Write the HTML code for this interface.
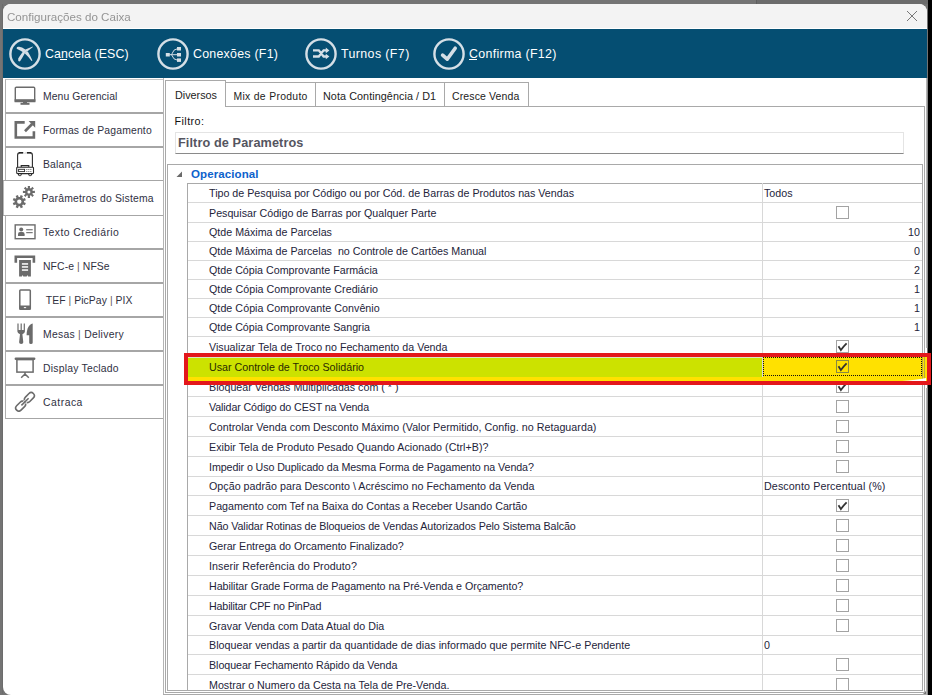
<!DOCTYPE html>
<html><head><meta charset="utf-8">
<style>
*{margin:0;padding:0;box-sizing:border-box}
html,body{width:932px;height:695px;overflow:hidden;background:#000;font-family:"Liberation Sans",sans-serif;position:relative}
.a{position:absolute;white-space:pre}
.bg{left:0;top:0;width:928px;height:695px;background:#747474}
.win{left:3px;top:4px;width:924px;height:691px;background:#fff;border-radius:8px}
.title{left:3px;top:4px;width:924px;height:24px;background:#f3f3f3;border-radius:8px 8px 0 0}
.tt{color:#949494;will-change:transform}
.bar{left:3px;top:29px;width:924px;height:49px;background:#054e72}
.tb{color:#fff}
.tb u{text-decoration:none;border-bottom:1px solid #fff}
.sb{left:5px;width:159px;height:34px;border-left:1px solid #b0b0b0;border-top:1px solid #a6a6a6;border-bottom:1px solid #a6a6a6;border-right:1px solid #c9c9c9;background:#fff}
.sbp{left:3px;width:161px;height:34px;border-left:1px solid #b8b8b8;border-right:1px solid #c9c9c9;background:#fff}
.sbt{color:#30303f}
.o{color:#6a5d55}
.hl2{height:1px;background:#d8d8d8}
.tab{border:1px solid #a9a9a9;border-bottom:none;background:#fff}
.tabt{color:#222}
.nm{color:#24243a}
.cb{width:13px;height:13px;border:1px solid #a3a3a3;background:#fff}
</style></head><body>
<div class="a bg"></div>
<div class="a" style="left:757px;top:0;width:171px;height:4px;background:#6b6b6b"></div>
<div class="a" style="left:756px;top:0;width:1px;height:4px;background:#5e5e5e"></div>
<div class="a" style="left:2px;top:4px;width:1px;height:690px;background:#6c6c6c"></div>
<div class="a win"></div>
<div class="a title"></div>
<span class="a tt" style="left:7px;top:11.18px;font-size:11.6px;line-height:11.6px;">Configurações do Caixa</span>
<svg class="a" style="left:906px;top:10px" width="12" height="12" viewBox="0 0 12 12"><path d="M1 1L11 11M11 1L1 11" stroke="#777" stroke-width="1"/></svg>
<div class="a bar"></div>
<svg class="a" style="left:9px;top:38px" width="32" height="32" viewBox="0 0 32 32"><circle cx="16" cy="16" r="14.6" fill="none" stroke="#d5dfe6" stroke-width="2.4"/>
<path fill="#d5dfe6" d="M7.6 10Q7.8 8.9 9.5 8.8Q12.6 8.5 16.4 11.6L14.4 14.4Q12 12.6 8.1 10.9Q7.5 10.6 7.6 10Z"/>
<path fill="#d5dfe6" d="M23.7 8.5Q20 10 16.4 11.6Q14.5 12.6 13.3 14.4Q10.5 18.2 9.2 20.6Q8.7 23.3 10.4 23.4Q11.3 23.3 13 20.2L15.7 15.4Q17 13.8 18.5 13.3Q21 11 23.7 9.2Q24.1 8.6 23.7 8.5Z"/>
<path fill="#d5dfe6" d="M15.9 15.6L16.6 13.6L18.8 13.4Q21 17 23.3 22.3Q23.3 23.2 22.6 22.9Q19.5 19 15.9 15.6Z"/>
</svg>
<span class="a tb" style="left:45px;top:47.50px;font-size:12.4px;line-height:12.4px;letter-spacing:0.083px;">Cancela (ESC)</span>
<svg class="a" style="left:157px;top:38px" width="32" height="32" viewBox="0 0 32 32"><circle cx="16" cy="16" r="14.6" fill="none" stroke="#d5dfe6" stroke-width="2.4"/>
<g fill="#d5dfe6"><rect x="8.8" y="15" width="4" height="3.5"/><rect x="20" y="9" width="4" height="3.5"/><rect x="20" y="15" width="4" height="3.5"/><rect x="20" y="20.4" width="4" height="3.5"/></g>
<path d="M12.5 16.7H20.5M14.5 16.7Q16.5 10.7 20.5 10.7M14.5 16.7Q16.5 22.2 20.5 22.2" fill="none" stroke="#d5dfe6" stroke-width="1"/>
</svg>
<span class="a tb" style="left:193px;top:47.50px;font-size:12.4px;line-height:12.4px;letter-spacing:0.250px;">Conexões (F1)</span>
<svg class="a" style="left:305px;top:38px" width="32" height="32" viewBox="0 0 32 32"><circle cx="16" cy="16" r="14.6" fill="none" stroke="#d5dfe6" stroke-width="2.4"/>
<path d="M8 12.4H13.8L18.6 18.5H21.5M8 18.5H13.8L18.6 12.4H21.5" fill="none" stroke="#d5dfe6" stroke-width="2.3"/>
<path fill="#d5dfe6" d="M20.8 9.6L24.4 12.4L20.8 15.2ZM20.8 15.7L24.4 18.5L20.8 21.3Z"/>
</svg>
<span class="a tb" style="left:341px;top:47.50px;font-size:12.4px;line-height:12.4px;letter-spacing:0.400px;">Turnos (F7)</span>
<div class="a" style="left:60px;top:59px;width:7px;height:1px;background:#fff"></div>
<div class="a" style="left:469px;top:59px;width:8px;height:1px;background:#fff"></div>
<svg class="a" style="left:433px;top:38px" width="32" height="32" viewBox="0 0 32 32"><circle cx="16" cy="16" r="14.6" fill="none" stroke="#d5dfe6" stroke-width="2.4"/>
<path d="M9.6 17.2L14.2 21.2L22.2 10.2" fill="none" stroke="#d5dfe6" stroke-width="3.6" stroke-linecap="round" stroke-linejoin="round"/>
</svg>
<span class="a tb" style="left:469px;top:47.50px;font-size:12.4px;line-height:12.4px;letter-spacing:0.308px;">Confirma (F12)</span>

<div class="a sb" style="top:79px;border-top-color:#c4c4c4"></div>
<div class="a sb" style="top:113px"></div>
<div class="a sb" style="top:147px"></div>
<div class="a sbp" style="top:181px"></div><div class="a" style="left:3px;top:180px;width:3px;height:1px;background:#a6a6a6"></div><div class="a" style="left:3px;top:215px;width:3px;height:1px;background:#a6a6a6"></div>
<div class="a sb" style="top:215px"></div>
<div class="a sb" style="top:249px"></div>
<div class="a sb" style="top:283px"></div>
<div class="a sb" style="top:317px"></div>
<div class="a sb" style="top:351px"></div>
<div class="a sb" style="top:385px"></div>
<span class="a sbt" style="left:43px;top:92.20px;font-size:10.4px;line-height:10.4px;letter-spacing:0.077px;">Menu Gerencial</span>
<svg class="a" style="left:14px;top:86px" width="22" height="20" viewBox="0 0 22 20"><path d="M1.3 2.3Q1.3 1.3 2.3 1.3H19.7Q20.7 1.3 20.7 2.3V15.5H1.3Z" fill="none" stroke="#6b6b6b" stroke-width="1.4"/><rect x="0.6" y="13.2" width="20.8" height="2.4" fill="#6b6b6b"/><rect x="9" y="15.5" width="4" height="2" fill="#6b6b6b"/><rect x="6.5" y="16.8" width="9" height="2" fill="#6b6b6b"/></svg>
<span class="a sbt" style="left:43px;top:126.20px;font-size:10.4px;line-height:10.4px;letter-spacing:0.167px;">Formas de Pagamento</span>
<svg class="a" style="left:14px;top:120px" width="22" height="20" viewBox="0 0 22 20"><path d="M10.7 2.4H1.8V17.5H19.9V11.3" fill="none" stroke="#6b6b6b" stroke-width="2.6"/><path d="M14.6 1.1H21.2V7.8Z" fill="#6b6b6b"/><path d="M10.05 10.25L17.2 3.1L19.1 5L11.95 12.15Z" fill="#6b6b6b"/></svg>
<span class="a sbt" style="left:43px;top:160.20px;font-size:10.4px;line-height:10.4px;letter-spacing:0.167px;">Balança</span>
<svg class="a" style="left:15px;top:151px" width="20" height="26" viewBox="0 0 20 26"><path d="M2.6 16V4.2Q2.6 1.6 5.2 1.6H14.8Q17.4 1.6 17.4 4.2V16" fill="none" stroke="#2a2a2a" stroke-width="1.1"/><path d="M4 1.7H8M12 1.7H16" stroke="#222" stroke-width="1.4"/><rect x="8.2" y="0.8" width="3.6" height="1.8" fill="#fff"/><path d="M8.4 1.8H11.6" stroke="#bbb" stroke-width="0.8" stroke-dasharray="0.8 0.8"/><path d="M6.2 15.9V14.6H13.8V15.9" fill="none" stroke="#2a2a2a" stroke-width="1.1"/><rect x="1.7" y="16.2" width="16.8" height="6.4" rx="0.8" fill="#fff" stroke="#2a2a2a" stroke-width="1.1"/><rect x="3.6" y="18.3" width="6" height="2.3" fill="none" stroke="#2a2a2a" stroke-width="0.9"/><g fill="#2a2a2a"><circle cx="11.9" cy="18.6" r="0.5"/><circle cx="13.9" cy="18.6" r="0.5"/><circle cx="15.9" cy="18.6" r="0.5"/><circle cx="11.9" cy="20.6" r="0.5"/><circle cx="13.9" cy="20.6" r="0.5"/><circle cx="15.9" cy="20.6" r="0.5"/></g><path d="M3.5 22.6V24Q3.5 24.6 4.2 24.6H5.5Q6.2 24.6 6.2 24V22.6M13.8 22.6V24Q13.8 24.6 14.5 24.6H15.8Q16.5 24.6 16.5 24V22.6" fill="none" stroke="#2a2a2a" stroke-width="1"/></svg>
<span class="a sbt" style="left:41.5px;top:194.20px;font-size:10.4px;line-height:10.4px;letter-spacing:0.175px;">Parâmetros do Sistema</span>
<svg class="a" style="left:10px;top:184px" width="28" height="28" viewBox="0 0 28 28"><path fill-rule="evenodd" fill="#6b6b6b" d="M15.86 18.96L14.90 21.28L13.05 20.43L12.13 21.35L12.98 23.20L10.66 24.16L9.95 22.26L8.65 22.26L7.94 24.16L5.62 23.20L6.47 21.35L5.55 20.43L3.70 21.28L2.74 18.96L4.64 18.25L4.64 16.95L2.74 16.24L3.70 13.92L5.55 14.77L6.47 13.85L5.62 12.00L7.94 11.04L8.65 12.94L9.95 12.94L10.66 11.04L12.98 12.00L12.13 13.85L13.05 14.77L14.90 13.92L15.86 16.24L13.96 16.95L13.96 18.25ZM11.5 17.6A2.2 2.2 0 1 0 7.1000000000000005 17.6A2.2 2.2 0 1 0 11.5 17.6Z"/><path fill-rule="evenodd" fill="#6b6b6b" d="M24.89 6.76L24.89 9.04L22.77 8.91L22.35 9.93L23.95 11.33L22.33 12.95L20.93 11.35L19.91 11.77L20.04 13.89L17.76 13.89L17.89 11.77L16.87 11.35L15.47 12.95L13.85 11.33L15.45 9.93L15.03 8.91L12.91 9.04L12.91 6.76L15.03 6.89L15.45 5.87L13.85 4.47L15.47 2.85L16.87 4.45L17.89 4.03L17.76 1.91L20.04 1.91L19.91 4.03L20.93 4.45L22.33 2.85L23.95 4.47L22.35 5.87L22.77 6.89ZM20.4 7.9A1.5 1.5 0 1 0 17.4 7.9A1.5 1.5 0 1 0 20.4 7.9Z"/></svg>
<span class="a sbt" style="left:43px;top:228.20px;font-size:10.4px;line-height:10.4px;letter-spacing:0.429px;">Texto Crediário</span>
<svg class="a" style="left:14px;top:223px" width="22" height="17" viewBox="0 0 22 17"><rect x="1.2" y="1.9" width="19.8" height="13.8" fill="none" stroke="#6b6b6b" stroke-width="1.4"/><circle cx="7.2" cy="6.4" r="2" fill="#6b6b6b"/><path d="M4 11.3Q4 8.9 6 8.9H8.5Q10.6 8.9 10.6 11.3V13H4Z" fill="#6b6b6b"/><rect x="12.2" y="6.2" width="6.5" height="1.1" fill="#6b6b6b"/><rect x="12.2" y="9.1" width="6.5" height="1.1" fill="#6b6b6b"/></svg>
<span class="a sbt" style="left:43px;top:262.20px;font-size:10.4px;line-height:10.4px;letter-spacing:0.091px;">NFC-e <span class=o>|</span> NFSe</span>
<svg class="a" style="left:14px;top:255px" width="22" height="23" viewBox="0 0 22 23"><path d="M1.8 7.7V1.7H19.9V7.7" fill="none" stroke="#6b6b6b" stroke-width="2.6"/><path d="M5.1 5.1H16.9V21.5H14.1L13.4 19.9L12.7 21.5H9.3L8.6 19.9L7.9 21.5H5.1Z" fill="#6b6b6b"/><g fill="#fff"><rect x="7.9" y="8.2" width="6.2" height="1.5"/><rect x="7.9" y="11.2" width="6.2" height="1.5"/><rect x="7.9" y="14.3" width="6.2" height="1.5"/></g></svg>
<span class="a sbt" style="left:43px;top:296.20px;font-size:10.4px;line-height:10.4px;letter-spacing:0.059px;"> TEF <span class=o>|</span> PicPay <span class=o>|</span> PIX</span>
<svg class="a" style="left:18px;top:288px" width="14" height="23" viewBox="0 0 14 23"><rect x="1.8" y="1.9" width="10.5" height="19.3" rx="0.8" fill="none" stroke="#6b6b6b" stroke-width="1.5"/><rect x="1.5" y="17.5" width="11" height="4" fill="#6b6b6b"/><ellipse cx="7" cy="19.6" rx="1.3" ry="0.6" fill="#fff"/></svg>
<span class="a sbt" style="left:43px;top:330.20px;font-size:10.4px;line-height:10.4px;letter-spacing:0.267px;">Mesas <span class=o>|</span> Delivery</span>
<svg class="a" style="left:16px;top:322px" width="18" height="24" viewBox="0 0 18 24"><path d="M1.4 1.4H2.6V8.1H4.6V1.4H5.8V8.1H7.7V1.4H8.9V9.5Q8.9 11.3 6.4 12.2L7.3 20.3Q7.3 22 5.2 22Q3.1 22 3.1 20.3L4 12.2Q1.4 11.3 1.4 9.5Z" fill="#6b6b6b"/><path d="M16.7 1.6Q13.6 2.2 11.6 6.5Q10.6 9.5 10.6 13.2H13.2V20.8Q13.2 22 14.9 22Q16.7 22 16.7 20.8Z" fill="#6b6b6b"/></svg>
<span class="a sbt" style="left:43px;top:364.20px;font-size:10.4px;line-height:10.4px;letter-spacing:0.214px;">Display Teclado</span>
<svg class="a" style="left:14px;top:356px" width="22" height="23" viewBox="0 0 22 23"><rect x="0.6" y="1.6" width="20.8" height="2.4" rx="1.2" fill="#6b6b6b"/><rect x="2.9" y="3.6" width="16.2" height="12.5" fill="none" stroke="#6b6b6b" stroke-width="1.5"/><path d="M11 16V18.2M11 18L7.2 21.8M11 18L14.8 21.8" fill="none" stroke="#6b6b6b" stroke-width="1.5"/></svg>
<span class="a sbt" style="left:43px;top:398.20px;font-size:10.4px;line-height:10.4px;letter-spacing:0.500px;">Catraca</span>
<svg class="a" style="left:14px;top:390px" width="22" height="22" viewBox="0 0 22 22"><g fill="none" stroke="#6b6b6b" stroke-width="1.6"><rect x="-3.1" y="-5.6" width="6.2" height="11.2" rx="3.1" transform="translate(15.4 7.5) rotate(45)"/><rect x="-3.1" y="-5.6" width="6.2" height="11.2" rx="3.1" transform="translate(6.6 16.2) rotate(45)"/></g><g stroke="#fff" stroke-width="3.2"><path d="M11.2 11.8L12.3 10.7"/><path d="M9.7 13.1L10.7 12.1"/></g><path d="M7.4 15.4L14.6 8.2" stroke="#6b6b6b" stroke-width="1.5"/></svg>

<!-- tab control lines -->
<div class="a" style="left:163px;top:78px;width:1px;height:617px;background:#b4b4b4"></div>
<div class="a" style="left:163px;top:694px;width:764px;height:1px;background:#a9a9a9"></div>
<div class="a" style="left:165px;top:106px;width:760px;height:587px;border:1px solid #a9a9a9"></div>
<div class="a tab" style="left:165px;top:80px;width:61px;height:27px"></div>
<div class="a tab" style="left:225px;top:82px;width:91px;height:24px"></div>
<div class="a tab" style="left:315px;top:82px;width:130px;height:24px"></div>
<div class="a tab" style="left:444px;top:82px;width:85px;height:24px"></div>
<div class="a" style="left:166px;top:106px;width:59px;height:1px;background:#fff"></div>
<span class="a tabt" style="left:175px;top:89.86px;font-size:10.8px;line-height:10.8px;">Diversos</span>
<span class="a tabt" style="left:233.5px;top:92.20px;font-size:10.4px;line-height:10.4px;letter-spacing:0.308px;">Mix de Produto</span>
<span class="a tabt" style="left:323px;top:90.86px;font-size:10.8px;line-height:10.8px;letter-spacing:0.067px;">Nota Contingência / D1</span>
<span class="a tabt" style="left:452px;top:91.11px;font-size:10.5px;line-height:10.5px;letter-spacing:0.127px;">Cresce Venda</span>

<span class="a tabt" style="left:174.5px;top:115.86px;font-size:10.8px;line-height:10.8px;color:#111;letter-spacing:0.417px;">Filtro:</span>
<div class="a" style="left:175px;top:132px;width:729px;height:22px;border:1px solid #e4e4e4;border-bottom:1px solid #8a8a8a"></div>
<span class="a " style="left:178px;top:137.25px;font-size:12.7px;line-height:12.7px;font-weight:bold;color:#55555f;letter-spacing:0.105px;">Filtro de Parametros</span>

<!-- grid -->
<div class="a" style="left:167px;top:164px;width:756px;height:527px;border:1px solid #a9a9a9"></div>
<span class="a " style="left:191px;top:169.27px;font-size:11.5px;line-height:11.5px;font-weight:bold;color:#0d62cc;letter-spacing:0.100px;">Operacional</span>
<svg class="a" style="left:176px;top:171px" width="7" height="7" viewBox="0 0 7 7"><path d="M6 0.5L6 6L0.5 6Z" fill="#6a6a6a"/></svg>
<div class="a" style="left:187px;top:183px;width:1px;height:507px;background:#a9a9a9"></div>
<div class="a" style="left:187px;top:183px;width:735px;height:1px;background:#a9a9a9"></div>
<div class="a" style="left:762px;top:183px;width:1px;height:507px;background:#d8d8d8"></div>
<span class="a nm" style="left:209px;top:187.94px;font-size:10.7px;line-height:10.7px;">Tipo de Pesquisa por Código ou por Cód. de Barras de Produtos nas Vendas</span>
<span class="a nm" style="left:764px;top:187.94px;font-size:10.7px;line-height:10.7px;">Todos</span>
<div class="a hl2" style="left:188px;top:202px;width:734px"></div>
<span class="a nm" style="left:209px;top:207.94px;font-size:10.7px;line-height:10.7px;">Pesquisar Código de Barras por Qualquer Parte</span>
<div class="a cb" style="left:836px;top:206px"></div>
<div class="a hl2" style="left:188px;top:222px;width:734px"></div>
<span class="a nm" style="left:209px;top:226.94px;font-size:10.7px;line-height:10.7px;">Qtde Máxima de Parcelas</span>
<span class="a nm" style="right:12px;top:226.94px;font-size:10.7px;line-height:10.7px;">10</span>
<div class="a hl2" style="left:188px;top:241px;width:734px"></div>
<span class="a nm" style="left:209px;top:245.94px;font-size:10.7px;line-height:10.7px;">Qtde Máxima de Parcelas  no Controle de Cartões Manual</span>
<span class="a nm" style="right:12px;top:245.94px;font-size:10.7px;line-height:10.7px;">0</span>
<div class="a hl2" style="left:188px;top:260px;width:734px"></div>
<span class="a nm" style="left:209px;top:264.94px;font-size:10.7px;line-height:10.7px;">Qtde Cópia Comprovante Farmácia</span>
<span class="a nm" style="right:12px;top:264.94px;font-size:10.7px;line-height:10.7px;">2</span>
<div class="a hl2" style="left:188px;top:279px;width:734px"></div>
<span class="a nm" style="left:209px;top:283.94px;font-size:10.7px;line-height:10.7px;letter-spacing:0.048px;">Qtde Cópia Comprovante Crediário</span>
<span class="a nm" style="right:12px;top:283.94px;font-size:10.7px;line-height:10.7px;">1</span>
<div class="a hl2" style="left:188px;top:298px;width:734px"></div>
<span class="a nm" style="left:209px;top:302.94px;font-size:10.7px;line-height:10.7px;letter-spacing:0.047px;">Qtde Cópia Comprovante Convênio</span>
<span class="a nm" style="right:12px;top:302.94px;font-size:10.7px;line-height:10.7px;">1</span>
<div class="a hl2" style="left:188px;top:317px;width:734px"></div>
<span class="a nm" style="left:209px;top:321.94px;font-size:10.7px;line-height:10.7px;">Qtde Cópia Comprovante Sangria</span>
<span class="a nm" style="right:12px;top:321.94px;font-size:10.7px;line-height:10.7px;">1</span>
<div class="a hl2" style="left:188px;top:336px;width:734px"></div>
<span class="a nm" style="left:209px;top:341.94px;font-size:10.7px;line-height:10.7px;">Visualizar Tela de Troco no Fechamento da Venda</span>
<div class="a cb" style="left:836px;top:340px"><svg class="a" style="left:0;top:0" width="11" height="11" viewBox="0 0 11 11"><path d="M1.5 5.2Q2.8 7.2 3.9 9.1Q6.6 5.2 9.6 2.3" fill="none" stroke="#333" stroke-width="1.8"/></svg></div>
<div class="a hl2" style="left:188px;top:356px;width:734px"></div>
<span class="a nm" style="left:209px;top:361.94px;font-size:10.7px;line-height:10.7px;">Usar Controle de Troco Solidário</span>
<div class="a cb" style="left:836px;top:360px"><svg class="a" style="left:0;top:0" width="11" height="11" viewBox="0 0 11 11"><path d="M1.5 5.2Q2.8 7.2 3.9 9.1Q6.6 5.2 9.6 2.3" fill="none" stroke="#333" stroke-width="1.8"/></svg></div>
<div class="a hl2" style="left:188px;top:376px;width:734px"></div>
<span class="a nm" style="left:209px;top:381.94px;font-size:10.7px;line-height:10.7px;">Bloquear Vendas Multiplicadas com ( * )</span>
<div class="a cb" style="left:836px;top:380px"><svg class="a" style="left:0;top:0" width="11" height="11" viewBox="0 0 11 11"><path d="M1.5 5.2Q2.8 7.2 3.9 9.1Q6.6 5.2 9.6 2.3" fill="none" stroke="#333" stroke-width="1.8"/></svg></div>
<div class="a hl2" style="left:188px;top:396px;width:734px"></div>
<span class="a nm" style="left:209px;top:401.94px;font-size:10.7px;line-height:10.7px;letter-spacing:-0.117px;">Validar Código do CEST na Venda</span>
<div class="a cb" style="left:836px;top:400px"></div>
<div class="a hl2" style="left:188px;top:416px;width:734px"></div>
<span class="a nm" style="left:209px;top:421.94px;font-size:10.7px;line-height:10.7px;letter-spacing:0.036px;">Controlar Venda com Desconto Máximo (Valor Permitido, Config. no Retaguarda)</span>
<div class="a cb" style="left:836px;top:420px"></div>
<div class="a hl2" style="left:188px;top:436px;width:734px"></div>
<span class="a nm" style="left:209px;top:441.94px;font-size:10.7px;line-height:10.7px;letter-spacing:0.035px;">Exibir Tela de Produto Pesado Quando Acionado (Ctrl+B)?</span>
<div class="a cb" style="left:836px;top:440px"></div>
<div class="a hl2" style="left:188px;top:456px;width:734px"></div>
<span class="a nm" style="left:209px;top:461.94px;font-size:10.7px;line-height:10.7px;letter-spacing:-0.090px;">Impedir o Uso Duplicado da Mesma Forma de Pagamento na Venda?</span>
<div class="a cb" style="left:836px;top:460px"></div>
<div class="a hl2" style="left:188px;top:476px;width:734px"></div>
<span class="a nm" style="left:209px;top:480.94px;font-size:10.7px;line-height:10.7px;letter-spacing:0.027px;">Opção padrão para Desconto \ Acréscimo no Fechamento da Venda</span>
<span class="a nm" style="left:764px;top:480.94px;font-size:10.7px;line-height:10.7px;letter-spacing:0.114px;">Desconto Percentual (%)</span>
<div class="a hl2" style="left:188px;top:495px;width:734px"></div>
<span class="a nm" style="left:209px;top:500.94px;font-size:10.7px;line-height:10.7px;">Pagamento com Tef na Baixa do Contas a Receber Usando Cartão</span>
<div class="a cb" style="left:836px;top:499px"><svg class="a" style="left:0;top:0" width="11" height="11" viewBox="0 0 11 11"><path d="M1.5 5.2Q2.8 7.2 3.9 9.1Q6.6 5.2 9.6 2.3" fill="none" stroke="#333" stroke-width="1.8"/></svg></div>
<div class="a hl2" style="left:188px;top:515px;width:734px"></div>
<span class="a nm" style="left:209px;top:520.94px;font-size:10.7px;line-height:10.7px;letter-spacing:-0.084px;">Não Validar Rotinas de Bloqueios de Vendas Autorizados Pelo Sistema Balcão</span>
<div class="a cb" style="left:836px;top:519px"></div>
<div class="a hl2" style="left:188px;top:535px;width:734px"></div>
<span class="a nm" style="left:209px;top:540.94px;font-size:10.7px;line-height:10.7px;letter-spacing:-0.035px;">Gerar Entrega do Orcamento Finalizado?</span>
<div class="a cb" style="left:836px;top:539px"></div>
<div class="a hl2" style="left:188px;top:555px;width:734px"></div>
<span class="a nm" style="left:209px;top:560.94px;font-size:10.7px;line-height:10.7px;letter-spacing:0.079px;">Inserir Referência do Produto?</span>
<div class="a cb" style="left:836px;top:559px"></div>
<div class="a hl2" style="left:188px;top:575px;width:734px"></div>
<span class="a nm" style="left:209px;top:580.94px;font-size:10.7px;line-height:10.7px;letter-spacing:-0.051px;">Habilitar Grade Forma de Pagamento na Pré-Venda e Orçamento?</span>
<div class="a cb" style="left:836px;top:579px"></div>
<div class="a hl2" style="left:188px;top:595px;width:734px"></div>
<span class="a nm" style="left:209px;top:600.94px;font-size:10.7px;line-height:10.7px;letter-spacing:-0.159px;">Habilitar CPF no PinPad</span>
<div class="a cb" style="left:836px;top:599px"></div>
<div class="a hl2" style="left:188px;top:615px;width:734px"></div>
<span class="a nm" style="left:209px;top:620.94px;font-size:10.7px;line-height:10.7px;">Gravar Venda com Data Atual do Dia</span>
<div class="a cb" style="left:836px;top:619px"></div>
<div class="a hl2" style="left:188px;top:635px;width:734px"></div>
<span class="a nm" style="left:209px;top:639.94px;font-size:10.7px;line-height:10.7px;letter-spacing:0.044px;">Bloquear vendas a partir da quantidade de dias informado que permite NFC-e Pendente</span>
<span class="a nm" style="left:764px;top:639.94px;font-size:10.7px;line-height:10.7px;">0</span>
<div class="a hl2" style="left:188px;top:654px;width:734px"></div>
<span class="a nm" style="left:209px;top:659.94px;font-size:10.7px;line-height:10.7px;letter-spacing:-0.053px;">Bloquear Fechamento Rápido da Venda</span>
<div class="a cb" style="left:836px;top:658px"></div>
<div class="a hl2" style="left:188px;top:674px;width:734px"></div>
<span class="a nm" style="left:209px;top:679.94px;font-size:10.7px;line-height:10.7px;">Mostrar o Numero da Cesta na Tela de Pre-Venda.</span>
<div class="a cb" style="left:836px;top:678px"></div>

<!-- highlight -->
<div class="a" style="left:188px;top:357px;width:574px;height:1px;background:#dce8c4"></div>
<div class="a" style="left:188px;top:358px;width:574px;height:19px;background:#cce200"></div>
<div class="a" style="left:188px;top:377px;width:739px;height:4px;background:#ffe100"></div>
<div class="a" style="left:763px;top:357px;width:164px;height:20px;background:#ffe100"></div>
<div class="a" style="left:763px;top:357px;width:159px;height:19px;border:1px dotted #111"></div>
<span class="a nm" style="left:209px;top:361.94px;font-size:10.7px;line-height:10.7px;color:#2a2a00">Usar Controle de Troco Solidário</span>
<div class="a cb" style="left:836px;top:360px;background:transparent;border-color:#8a8a40"><svg class="a" style="left:0;top:0" width="11" height="11" viewBox="0 0 11 11"><path d="M1.5 5.2Q2.8 7.2 3.9 9.1Q6.6 5.2 9.6 2.3" fill="none" stroke="#333" stroke-width="1.8"/></svg></div>
<div class="a" style="left:922px;top:357px;width:1px;height:24px;background:#b8a840"></div>
<div class="a" style="left:924px;top:357px;width:1px;height:24px;background:#b8a840"></div>
<svg class="a" style="left:880px;top:376px" width="48" height="6" viewBox="0 0 48 6"><path d="M22 5Q36 4 46 2V5Z" fill="#fff"/></svg>
<div class="a" style="left:184px;top:353px;width:747px;height:32px;border:4px solid #e3171b"></div>
<div class="a" style="left:926px;top:78px;width:2px;height:270px;background:linear-gradient(90deg,#c8c8c8,#7a7a7a)"></div>
<div class="a" style="left:926px;top:388px;width:2px;height:307px;background:linear-gradient(90deg,#c8c8c8,#7a7a7a)"></div>
</body></html>
